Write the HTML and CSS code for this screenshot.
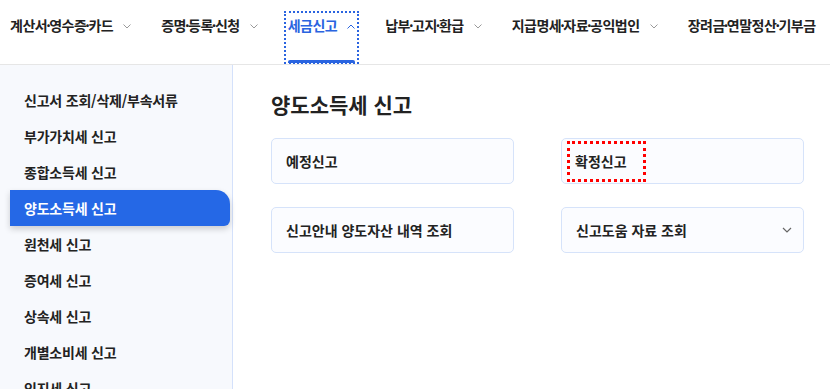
FILE: index.html
```html
<!DOCTYPE html>
<html lang="ko">
<head>
    <meta charset="UTF-8">
    <meta name="viewport" content="width=device-width, initial-scale=1.0">
    <title>양도소득세 신고</title>
    <link rel="stylesheet" href="styles.css">
</head>
<body>
    <nav class="gnb">
        <a class="gnb-item">계산서<i>·</i>영수증<i>·</i>카드 <svg class="caret" viewBox="0 0 8 5"><path d="M.5.5l3.5 3.5 3.5-3.5"/></svg></a>
        <a class="gnb-item">증명<i>·</i>등록<i>·</i>신청 <svg class="caret" viewBox="0 0 8 5"><path d="M.5.5l3.5 3.5 3.5-3.5"/></svg></a>
        <a class="gnb-item active">세금신고 <svg class="caret" viewBox="0 0 8 5"><path d="M.5 4.5l3.5-3.5 3.5 3.5"/></svg></a>
        <a class="gnb-item">납부<i>·</i>고지<i>·</i>환급 <svg class="caret" viewBox="0 0 8 5"><path d="M.5.5l3.5 3.5 3.5-3.5"/></svg></a>
        <a class="gnb-item">지급명세<i>·</i>자료<i>·</i>공익법인 <svg class="caret" viewBox="0 0 8 5"><path d="M.5.5l3.5 3.5 3.5-3.5"/></svg></a>
        <a class="gnb-item">장려금<i>·</i>연말정산<i>·</i>기부금</a>
    </nav>

    <div class="layout">
        <aside class="lnb">
            <ul>
                <li>신고서 조회/삭제/부속서류</li>
                <li>부가가치세 신고</li>
                <li>종합소득세 신고</li>
                <li class="on">양도소득세 신고</li>
                <li>원천세 신고</li>
                <li>증여세 신고</li>
                <li>상속세 신고</li>
                <li>개별소비세 신고</li>
                <li>인지세 신고</li>
            </ul>
        </aside>

        <main class="content">
            <h1>양도소득세 신고</h1>
            <div class="menu-grid">
                <a class="menu-card">예정신고</a>
                <a class="menu-card tight"><span class="focus">확정신고</span></a>
                <a class="menu-card">신고안내 양도자산 내역 조회</a>
                <a class="menu-card">신고도움 자료 조회 <svg class="card-caret" viewBox="0 0 10 6"><path d="M1 1l4 4 4-4"/></svg></a>
            </div>
        </main>
    </div>
</body>
</html>
```

FILE: styles.css
```css
* {
    box-sizing: border-box;
}
body {
    margin: 0;
    font-family: "Noto Sans CJK KR", "Noto Sans", sans-serif;
    color: #222;
    background: #fff;
    overflow: hidden;
}
a {
    color: inherit;
    text-decoration: none;
}

/* top menu */
.gnb {
    display: flex;
    gap: 24px;
    height: 65px;
    padding: 12px 0 0 7px;
    border-bottom: 1px solid #e6e6e6;
    white-space: nowrap;
    overflow: hidden;
}
.gnb-item {
    display: flex;
    align-items: flex-start;
    height: 52px;
    padding: 2px 3px 0;
    font-size: 14px;
    line-height: 22px;
    font-weight: 600;
    letter-spacing: -0.5px;
}
.gnb-item i {
    font-style: normal;
    margin: 0 -1px;
}
.gnb-item .caret {
    width: 8px;
    height: 5px;
    margin: 10px 0 0 10px;
    fill: none;
    stroke: #9a9a9a;
    stroke-width: 1;
}
.gnb-item.active {
    position: relative;
    color: #2a64e0;
    outline: 2px dotted #2a64e0;
    outline-offset: -1px;
    height: 51px;
}
.gnb-item.active .caret {
    stroke: #2a64e0;
}
.gnb-item.active::after {
    content: "";
    position: absolute;
    left: 3px;
    right: 3px;
    bottom: 0;
    height: 3px;
    background: #2a64e0;
    border-radius: 2px 2px 0 0;
}

/* layout */
.layout {
    display: flex;
    height: 324px;
}
.lnb {
    width: 233px;
    flex-shrink: 0;
    background: #f7f9fd;
    border-right: 1px solid #d4e1fb;
}
.lnb ul {
    list-style: none;
    margin: 0;
    padding: 17px 0 0 10px;
}
.lnb li {
    height: 36px;
    line-height: 36px;
    padding-left: 14px;
    font-size: 14px;
    font-weight: 600;
    letter-spacing: -0.2px;
    width: 220px;
}
.lnb li.on {
    background: #2568e6;
    color: #fff;
    border-radius: 0 14px 6px 0;
    box-shadow: 0 3px 6px rgba(0, 0, 0, 0.18);
}

/* content */
.content {
    flex: 1;
    padding: 25px 26px 0 38px;
}
.content h1 {
    margin: 0 0 19px;
    font-size: 21px;
    line-height: 29px;
    font-weight: 700;
}
.menu-grid {
    display: grid;
    grid-template-columns: 243px 243px;
    column-gap: 47px;
    row-gap: 23px;
}
.menu-card {
    display: flex;
    align-items: center;
    height: 46px;
    padding: 0 14px;
    border: 1px solid #d6e3fa;
    border-radius: 5px;
    background: #fbfcff;
    font-size: 14px;
    font-weight: 600;
}
.menu-card.tight {
    padding-left: 5px;
}
.menu-card .focus {
    display: flex;
    align-items: center;
    width: 79px;
    height: 41px;
    padding-left: 5px;
    border: 3px dotted #ff0000;
}
.card-caret {
    width: 10px;
    height: 6px;
    margin-left: auto;
    margin-right: -3px;
    fill: none;
    stroke: #666;
    stroke-width: 1.2;
}
```
